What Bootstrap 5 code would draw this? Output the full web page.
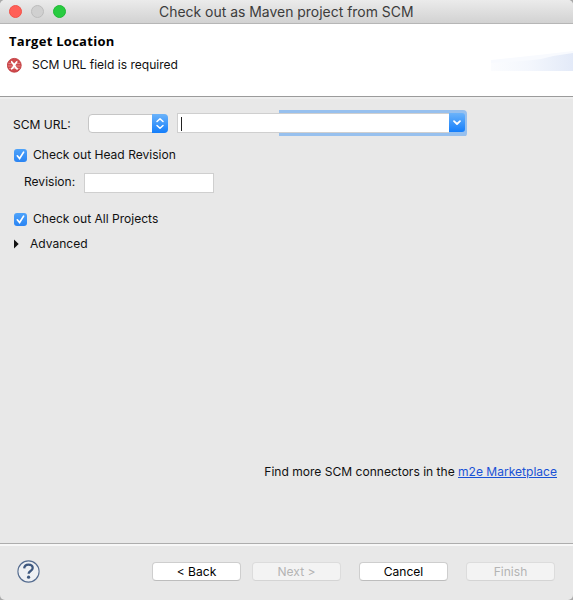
<!DOCTYPE html>
<html lang="en">
<head>
<meta charset="utf-8">
<meta name="viewport" content="width=device-width, initial-scale=1">
<title>Check out as Maven project from SCM</title>
<link href="https://cdn.jsdelivr.net/npm/bootstrap@5.3.0/dist/css/bootstrap.min.css" rel="stylesheet">
<style>
html, body { height: 100%; }
body { background: #a9a9a9; font: 12.05px/16px Inter, Roboto, sans-serif; color: #111; }
.wizard { width: 573px; height: 600px; background: #e8e8e8; border-radius: 5px; }
.titlebar { height: 24px; padding-left: 9px; background: linear-gradient(#ebebeb, #d2d2d2); border-bottom: 1px solid #b6b6b6; }
.light { width: 13px; height: 13px; border-radius: 50%; margin-right: 9px; }
.light-close { background: #ff5f57; border: 1px solid #f05149; }
.light-min { background: #d0d0d0; border: 1px solid #bcbcbc; }
.light-zoom { background: #28cb40; border: 1px solid #1fb934; }
.title { margin-left: 84px; padding-top: 1px; font-size: 13.95px; color: #3c3c3c; white-space: nowrap; }
.banner { height: 73px; padding: 9px 0 0 7px; border-bottom: 1px solid #9b9b9b; }
.banner h1 { font: 700 13px/17px "Open Sans", "Noto Sans", sans-serif; letter-spacing: .27px; margin: 0 0 7px 2px; color: #000; }
.swoosh { right: 0; top: 26px; }
.message { margin-left: 10px; }
.content { padding: 14px 0 0 13px; border-top: 2px solid #eee; }
.field { background: #fff; border: 1px solid #cfcfcf; }
.url-label { width: 58px; padding-top: 2px; }
.selector { width: 80px; height: 19px; background: #fff; border: 1px solid #c6c6c6; border-radius: 4px; margin-left: 17px; }
.blue-end { background: linear-gradient(#6bb3fa, #147efb); }
.selector .blue-end { width: 16px; height: 19px; margin: -1px -1px 0 0; border-radius: 0 4px 4px 0; }
.combo { width: 290px; height: 27px; margin-left: 9px; padding: 3px 2px 4px 0; background: linear-gradient(#97c0ee, #97c0ee) 102px 0 / 188px 26px no-repeat; border-radius: 0 4px 4px 0; }
.combo .field { width: 272px; height: 20px; padding: 3px 0 0 3px; border-right: 0; }
.combo .blue-end { width: 16px; height: 19px; border-radius: 0 3px 3px 0; }
.caret { width: 1px; height: 14px; background: #222; }
.tick { width: 13px; height: 13px; border-radius: 3px; background: linear-gradient(#4ea3fa, #2a84f3); margin: 0 6px 0 1px; }
.revision-label { width: 52px; }
.revision { width: 130px; height: 20px; margin-left: 8px; margin-top: 2px; }
.combo-row { margin-top: -3px; }
.head-row { margin-top: 10px; }
.rev-row { margin: 8px 0 0 11px; }
.all-row { margin-top: 18px; }
.adv-row { margin-top: 9px; }
.marketplace { margin: auto 16px 63px auto; }
.marketplace a { color: #1a52d6; }
.actions { height: 57px; padding: 0 18px 1px 17px; border-top: 1px solid #adadad; box-shadow: inset 0 2px #f7f7f7; }
.buttons { gap: 18px; }
.btn-mac { --bs-btn-padding-x: 0; --bs-btn-padding-y: 0; --bs-btn-font-size: 12.05px; --bs-btn-line-height: 17px; --bs-btn-color: #000; --bs-btn-bg: #fff; --bs-btn-border-color: #cecece; --bs-btn-border-radius: 4px; --bs-btn-disabled-color: #b4b4b4; --bs-btn-disabled-bg: #f3f3f3; --bs-btn-disabled-border-color: #dcdcdc; --bs-btn-disabled-opacity: 1; width: 89px; height: 19px; line-height: 17px; border-bottom-color: #bdbdbd; }
.btn-mac:disabled { border-bottom-color: #d4d4d4; }
.btn-back { margin-right: -7px; }
svg { display: block; flex: none; }
.t { white-space: nowrap; }
</style>
</head>
<body>
<div class="wizard d-flex flex-column overflow-hidden">
  <header class="titlebar d-flex align-items-center flex-shrink-0">
    <span class="light light-close"></span><span class="light light-min"></span><span class="light light-zoom"></span>
    <span class="title">Check out as Maven project from SCM</span>
  </header>
  <section class="banner bg-white position-relative flex-shrink-0">
    <h1>Target Location</h1>
    <div class="d-flex align-items-center">
      <svg width="15" height="16" viewBox="0 0 15 16"><circle cx="7.3" cy="8.3" r="6.9" fill="#d04a4d" stroke="#c03a3d" stroke-width=".9"/><path d="M1.4 6.5H13.2M1 9H13.6M2 11.5H12.6" stroke="#e28a8b" stroke-width=".9" fill="none"/><path d="M4 4.6C6.2 4.6 8 11.9 10.8 11.9M10.4 4.6C8.5 4.6 6.5 11.9 4 11.9" fill="none" stroke="#fff" stroke-width="1.9"/></svg>
      <span class="t message">SCM URL field is required</span>
    </div>
    <svg class="swoosh position-absolute" width="82" height="21" viewBox="0 0 82 21">
      <defs><linearGradient id="s"><stop stop-color="#fbfcfe"/><stop offset=".45" stop-color="#f4f7fd"/><stop offset="1" stop-color="#e3eaf8"/></linearGradient></defs>
      <path d="M0 10Q40 6 82 1V21H0Z" fill="#f8fafe"/><path d="M0 13Q35 11 50 9Q65 5 82 3V21H0Z" fill="url(#s)"/>
    </svg>
  </section>
  <main class="content d-flex flex-column flex-grow-1">
    <div class="d-flex align-items-center combo-row">
      <span class="t url-label">SCM URL:</span>
      <div class="selector d-flex justify-content-end">
        <span class="blue-end"><svg width="16" height="19" viewBox="0 0 16 19" fill="none" stroke="#fff" stroke-width="1.5" stroke-linecap="round" stroke-linejoin="round"><path d="M5 7.5 8 4.7l3 2.8M5 11.5l3 2.8 3-2.8"/></svg></span>
      </div>
      <div class="combo d-flex">
        <div class="field"><div class="caret"></div></div>
        <span class="blue-end"><svg width="16" height="19" viewBox="0 0 16 19" fill="none" stroke="#fff" stroke-width="1.8" stroke-linecap="round" stroke-linejoin="round"><path d="m5 8.2 3 2.8 3-2.8"/></svg></span>
      </div>
    </div>
    <label class="d-flex align-items-center head-row"><span class="tick"><svg width="13" height="13" viewBox="0 0 13 13"><path d="m3.3 6.8 2.3 2.7 4-6.4" fill="none" stroke="#fff" stroke-width="1.7" stroke-linecap="round"/></svg></span><span class="t">Check out Head Revision</span></label>
    <div class="d-flex align-items-center rev-row"><span class="t revision-label">Revision:</span><div class="field revision"></div></div>
    <label class="d-flex align-items-center all-row"><span class="tick"><svg width="13" height="13" viewBox="0 0 13 13"><path d="m3.3 6.8 2.3 2.7 4-6.4" fill="none" stroke="#fff" stroke-width="1.7" stroke-linecap="round"/></svg></span><span class="t">Check out All Projects</span></label>
    <div class="d-flex align-items-center adv-row"><svg width="17" height="10" viewBox="0 0 17 10"><path d="M1 .5 5.7 5 1 9.5Z" fill="#111"/></svg><span class="t">Advanced</span></div>
    <div class="marketplace t">Find more SCM connectors in the <a href="#">m2e Marketplace</a></div>
  </main>
  <footer class="actions d-flex align-items-center flex-shrink-0">
    <svg width="23" height="23" viewBox="0 0 23 23"><circle cx="11.5" cy="11.5" r="10.6" fill="#eef0f3" stroke="#566d90" stroke-width="1.1"/><path d="M7.2 8.3C7.4 5.8 9.1 4.6 11.4 4.6s4.3 1.2 4.3 3.4c0 3-4.1 2.9-4.1 5.8" fill="none" stroke="#3e587f" stroke-width="2.3"/><circle cx="11.6" cy="17.2" r="1.6" fill="#3e587f"/></svg>
    <div class="d-flex ms-auto buttons">
      <button class="btn btn-mac btn-back">&lt; Back</button><button class="btn btn-mac" disabled>Next &gt;</button><button class="btn btn-mac">Cancel</button><button class="btn btn-mac" disabled>Finish</button>
    </div>
  </footer>
</div>
<script src="https://cdn.jsdelivr.net/npm/bootstrap@5.3.0/dist/js/bootstrap.bundle.min.js"></script>
</body>
</html>
